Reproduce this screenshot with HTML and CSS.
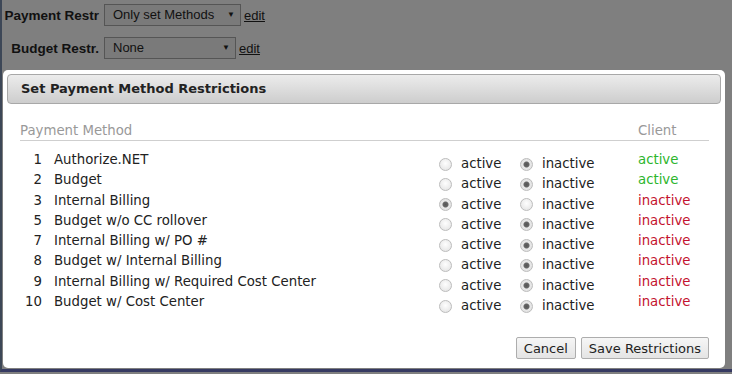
FILE: index.html
```html
<!DOCTYPE html>
<html>
<head>
    <title>Payment Restrictions</title>
    <link rel="stylesheet" href="styles.css">
</head>
<body>
    <div class="page">
        <div class="filters">
            <div class="filter-row">
                <label class="filter-label">Payment Restr</label>
                <div class="fake-select wide">Only set Methods<span class="arrow">&#9660;</span></div>
                <a class="edit-link" href="#">edit</a>
            </div>
            <div class="filter-row">
                <label class="filter-label">Budget Restr.</label>
                <div class="fake-select">None<span class="arrow">&#9660;</span></div>
                <a class="edit-link" href="#">edit</a>
            </div>
        </div>

        <div class="dialog">
            <div class="dialog-title">Set Payment Method Restrictions</div>
            <div class="dialog-body">
                <div class="method-head">
                    <span>Payment Method</span>
                    <span class="head-client">Client</span>
                </div>

                <div class="methods">
                    <div class="method-row">
                        <span class="num">1</span><span class="name">Authorize.NET</span>
                        <label class="opt"><span class="radio"></span>active</label>
                        <label class="opt"><span class="radio checked"></span>inactive</label>
                        <span class="client on">active</span>
                    </div>
                    <div class="method-row">
                        <span class="num">2</span><span class="name">Budget</span>
                        <label class="opt"><span class="radio"></span>active</label>
                        <label class="opt"><span class="radio checked"></span>inactive</label>
                        <span class="client on">active</span>
                    </div>
                    <div class="method-row">
                        <span class="num">3</span><span class="name">Internal Billing</span>
                        <label class="opt"><span class="radio checked"></span>active</label>
                        <label class="opt"><span class="radio"></span>inactive</label>
                        <span class="client off">inactive</span>
                    </div>
                    <div class="method-row">
                        <span class="num">5</span><span class="name">Budget w/o CC rollover</span>
                        <label class="opt"><span class="radio"></span>active</label>
                        <label class="opt"><span class="radio checked"></span>inactive</label>
                        <span class="client off">inactive</span>
                    </div>
                    <div class="method-row">
                        <span class="num">7</span><span class="name">Internal Billing w/ PO #</span>
                        <label class="opt"><span class="radio"></span>active</label>
                        <label class="opt"><span class="radio checked"></span>inactive</label>
                        <span class="client off">inactive</span>
                    </div>
                    <div class="method-row">
                        <span class="num">8</span><span class="name">Budget w/ Internal Billing</span>
                        <label class="opt"><span class="radio"></span>active</label>
                        <label class="opt"><span class="radio checked"></span>inactive</label>
                        <span class="client off">inactive</span>
                    </div>
                    <div class="method-row">
                        <span class="num">9</span><span class="name">Internal Billing w/ Required Cost Center</span>
                        <label class="opt"><span class="radio"></span>active</label>
                        <label class="opt"><span class="radio checked"></span>inactive</label>
                        <span class="client off">inactive</span>
                    </div>
                    <div class="method-row">
                        <span class="num">10</span><span class="name">Budget w/ Cost Center</span>
                        <label class="opt"><span class="radio"></span>active</label>
                        <label class="opt"><span class="radio checked"></span>inactive</label>
                        <span class="client off">inactive</span>
                    </div>
                </div>

                <div class="actions">
                    <button class="btn">Cancel</button>
                    <button class="btn">Save Restrictions</button>
                </div>
            </div>
        </div>
    </div>
</body>
</html>
```

FILE: styles.css
```css
body {
    margin: 0;
    background-color: #7f7f7f;
    font-family: 'Liberation Sans', Arial, sans-serif;
    color: #111;
}

.page {
    height: 369px;
    border-left: 2px solid #3d4757;
    border-bottom: 3px solid #363a62;
}

.filters {
    padding-top: 4px;
}

.filter-row {
    display: flex;
    align-items: center;
    height: 22px;
    margin-bottom: 11px;
}

.filter-label {
    width: 97px;
    padding-right: 5px;
    text-align: right;
    font-weight: bold;
    font-size: 13.5px;
    white-space: nowrap;
}

.fake-select {
    position: relative;
    box-sizing: border-box;
    width: 132px;
    height: 22px;
    line-height: 20px;
    padding-left: 8px;
    background: #7a7a7a;
    border: 1px solid #555;
    font-size: 13px;
}

.fake-select.wide {
    width: 137px;
}

.arrow {
    position: absolute;
    right: 5px;
    top: 0;
    font-size: 8px;
}

.edit-link {
    margin-left: 3px;
    color: #111;
    font-size: 13px;
}

.dialog {
    box-sizing: border-box;
    width: 722px;
    height: 298px;
    margin: 4px 0 0 1px;
    padding: 4px 4px 0 4px;
    background: white;
    border-radius: 5px;
    font-family: 'DejaVu Sans', Verdana, sans-serif;
    font-size: 13.3px;
}

.dialog-title {
    height: 28px;
    line-height: 28px;
    padding-left: 13px;
    background: linear-gradient(#ececec, #cdcdcd);
    border: 1px solid #a8a8a8;
    border-radius: 4px;
    font-weight: bold;
    font-size: 13px;
    color: #222;
}

.dialog-body {
    padding: 0 12px 0 13px;
}

.method-head {
    display: flex;
    margin-top: 19px;
    padding-bottom: 1px;
    border-bottom: 1px solid #cfcfcf;
    color: #999;
    line-height: 16px;
}

.head-client {
    margin-left: auto;
    width: 71px;
}

.methods {
    margin-top: 11px;
}

.method-row {
    display: grid;
    grid-template-columns: 22px 397px 81px 118px auto;
    height: 20.3px;
    line-height: 16px;
    color: #222;
}

.num {
    text-align: right;
}

.name {
    padding-left: 12px;
}

.opt {
    display: flex;
    align-items: center;
    gap: 9px;
    padding-top: 4px;
    height: 16px;
}

.radio {
    flex: none;
    box-sizing: border-box;
    width: 13px;
    height: 13px;
    border-radius: 50%;
    border: 1px solid #bcbcbc;
    background: radial-gradient(circle at 50% 40%, #fefefe, #e0e0e0);
}

.radio.checked {
    background: radial-gradient(circle, #555 0, #666 2.5px, #e8e8e8 3.5px, #dcdcdc);
}

.client.on {
    color: #2db52d;
}

.client.off {
    color: #c4122f;
}

.actions {
    display: flex;
    justify-content: flex-end;
    gap: 5px;
    margin-top: 23px;
}

.btn {
    height: 22px;
    padding: 0 7px;
    background: linear-gradient(#f6f6f6, #e4e4e4);
    border: 1px solid #adadad;
    border-radius: 2px;
    font-family: 'DejaVu Sans', Verdana, sans-serif;
    font-size: 13px;
    color: #222;
}
```
